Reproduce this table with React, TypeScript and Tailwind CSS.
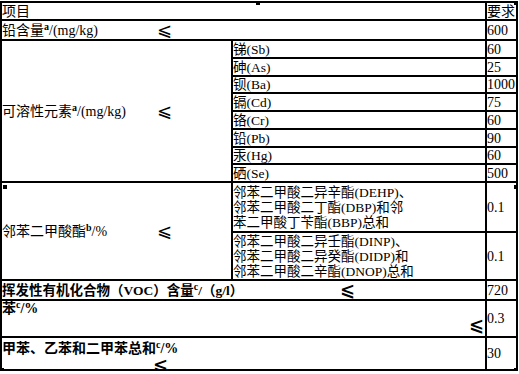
const FONT = "font-['Liberation_Serif','Noto_Sans_CJK_SC',serif]"

// 限量要求表：可溶性元素
const ELEMENTS = [
  { name: '锑(Sb)', limit: '60' },
  { name: '砷(As)', limit: '25' },
  { name: '钡(Ba)', limit: '1000' },
  { name: '镉(Cd)', limit: '75' },
  { name: '铬(Cr)', limit: '60' },
  { name: '铅(Pb)', limit: '90' },
  { name: '汞(Hg)', limit: '60' },
  { name: '硒(Se)', limit: '500' },
]

function Le({ className = '' }: { className?: string }) {
  return (
    <span className={`font-['DejaVu_Sans',sans-serif] text-[18px] leading-none ${className}`}>⩽</span>
  )
}

function Sup({ children }: { children: string }) {
  return <sup className="text-[10px] font-bold">{children}</sup>
}

function Handle({ className }: { className: string }) {
  return <span className={`absolute h-[4px] w-[4px] bg-black ${className}`} aria-hidden="true" />
}

export default function App() {
  return (
    <div className={`relative mt-px w-[518px] bg-white text-[14px] leading-[15px] text-black ${FONT}`}>
      <div className="grid grid-cols-[229px_252px_29px] grid-rows-[16px_18px_16px_16px_15px_16px_16px_16px_15px_16px_48px_46px_18px_35px_31px] gap-[2px] bg-black p-[2px]">
        {/* 表头 */}
        <div className="col-span-2 flex items-center bg-white">项目</div>
        <div className="flex items-center overflow-hidden whitespace-nowrap bg-white">要求</div>

        {/* 铅含量 */}
        <div className="col-span-2 flex items-center bg-white">
          <span className="w-[155px] whitespace-nowrap">
            铅含量<Sup>a</Sup>/(mg/kg)
          </span>
          <Le />
        </div>
        <div className="flex items-center bg-white">600</div>

        {/* 可溶性元素 */}
        <div className="row-span-8 flex items-center bg-white">
          <span className="w-[155px] whitespace-nowrap">
            可溶性元素<Sup>a</Sup>/(mg/kg)
          </span>
          <Le />
        </div>
        {ELEMENTS.map((el, i) => (
          <div key={el.name} className="contents">
            <div
              className="flex items-center whitespace-nowrap bg-white text-[13.5px]"
              style={{ gridRow: i + 3, gridColumn: 2 }}
            >
              {el.name}
            </div>
            <div className="flex items-center whitespace-nowrap bg-white" style={{ gridRow: i + 3, gridColumn: 3 }}>
              {el.limit}
            </div>
          </div>
        ))}

        {/* 邻苯二甲酸酯 */}
        <div className="row-span-2 flex items-center bg-white">
          <span className="w-[155px] whitespace-nowrap">
            邻苯二甲酸酯<Sup>b</Sup>/%
          </span>
          <Le />
        </div>
        <div className="flex flex-col justify-center whitespace-nowrap bg-white text-[13.5px]">
          <span>邻苯二甲酸二异辛酯(DEHP)、</span>
          <span>邻苯二甲酸二丁酯(DBP)和邻</span>
          <span>苯二甲酸丁苄酯(BBP)总和</span>
        </div>
        <div className="flex items-center bg-white">0.1</div>
        <div className="flex flex-col justify-center whitespace-nowrap bg-white text-[13.5px]">
          <span>邻苯二甲酸二异壬酯(DINP)、</span>
          <span>邻苯二甲酸二异癸酯(DIDP)和</span>
          <span>邻苯二甲酸二辛酯(DNOP)总和</span>
        </div>
        <div className="flex items-center bg-white">0.1</div>

        {/* VOC */}
        <div className="col-span-2 flex items-center whitespace-nowrap bg-white text-[13.5px] font-bold">
          <span className="w-[338px]">
            挥发性有机化合物（VOC）含量<Sup>c</Sup>/（g/l）
          </span>
          <Le className="font-bold" />
        </div>
        <div className="flex items-center bg-white">720</div>

        {/* 苯 */}
        <div className="col-span-2 flex flex-col justify-between bg-white pb-[2px] font-bold">
          <span className="whitespace-nowrap">
            苯<Sup>c</Sup>/%
          </span>
          <Le className="self-end pr-[1px]" />
        </div>
        <div className="flex items-center bg-white">0.3</div>

        {/* 甲苯、乙苯和二甲苯 */}
        <div className="col-span-2 flex flex-col justify-between bg-white pt-[3px] font-bold">
          <span className="whitespace-nowrap">
            甲苯、乙苯和二甲苯总和<Sup>c</Sup>/%
          </span>
          <Le className="ml-[151px]" />
        </div>
        <div className="flex items-center bg-white">30</div>
      </div>

      <Handle className="left-[256px] top-0" />
      <Handle className="left-[514px] top-0" />
      <Handle className="left-[3px] top-[184px]" />
      <Handle className="left-[514px] top-[184px]" />
      <Handle className="left-0 top-[367px]" />
      <Handle className="left-[514px] top-[367px]" />
    </div>
  )
}
